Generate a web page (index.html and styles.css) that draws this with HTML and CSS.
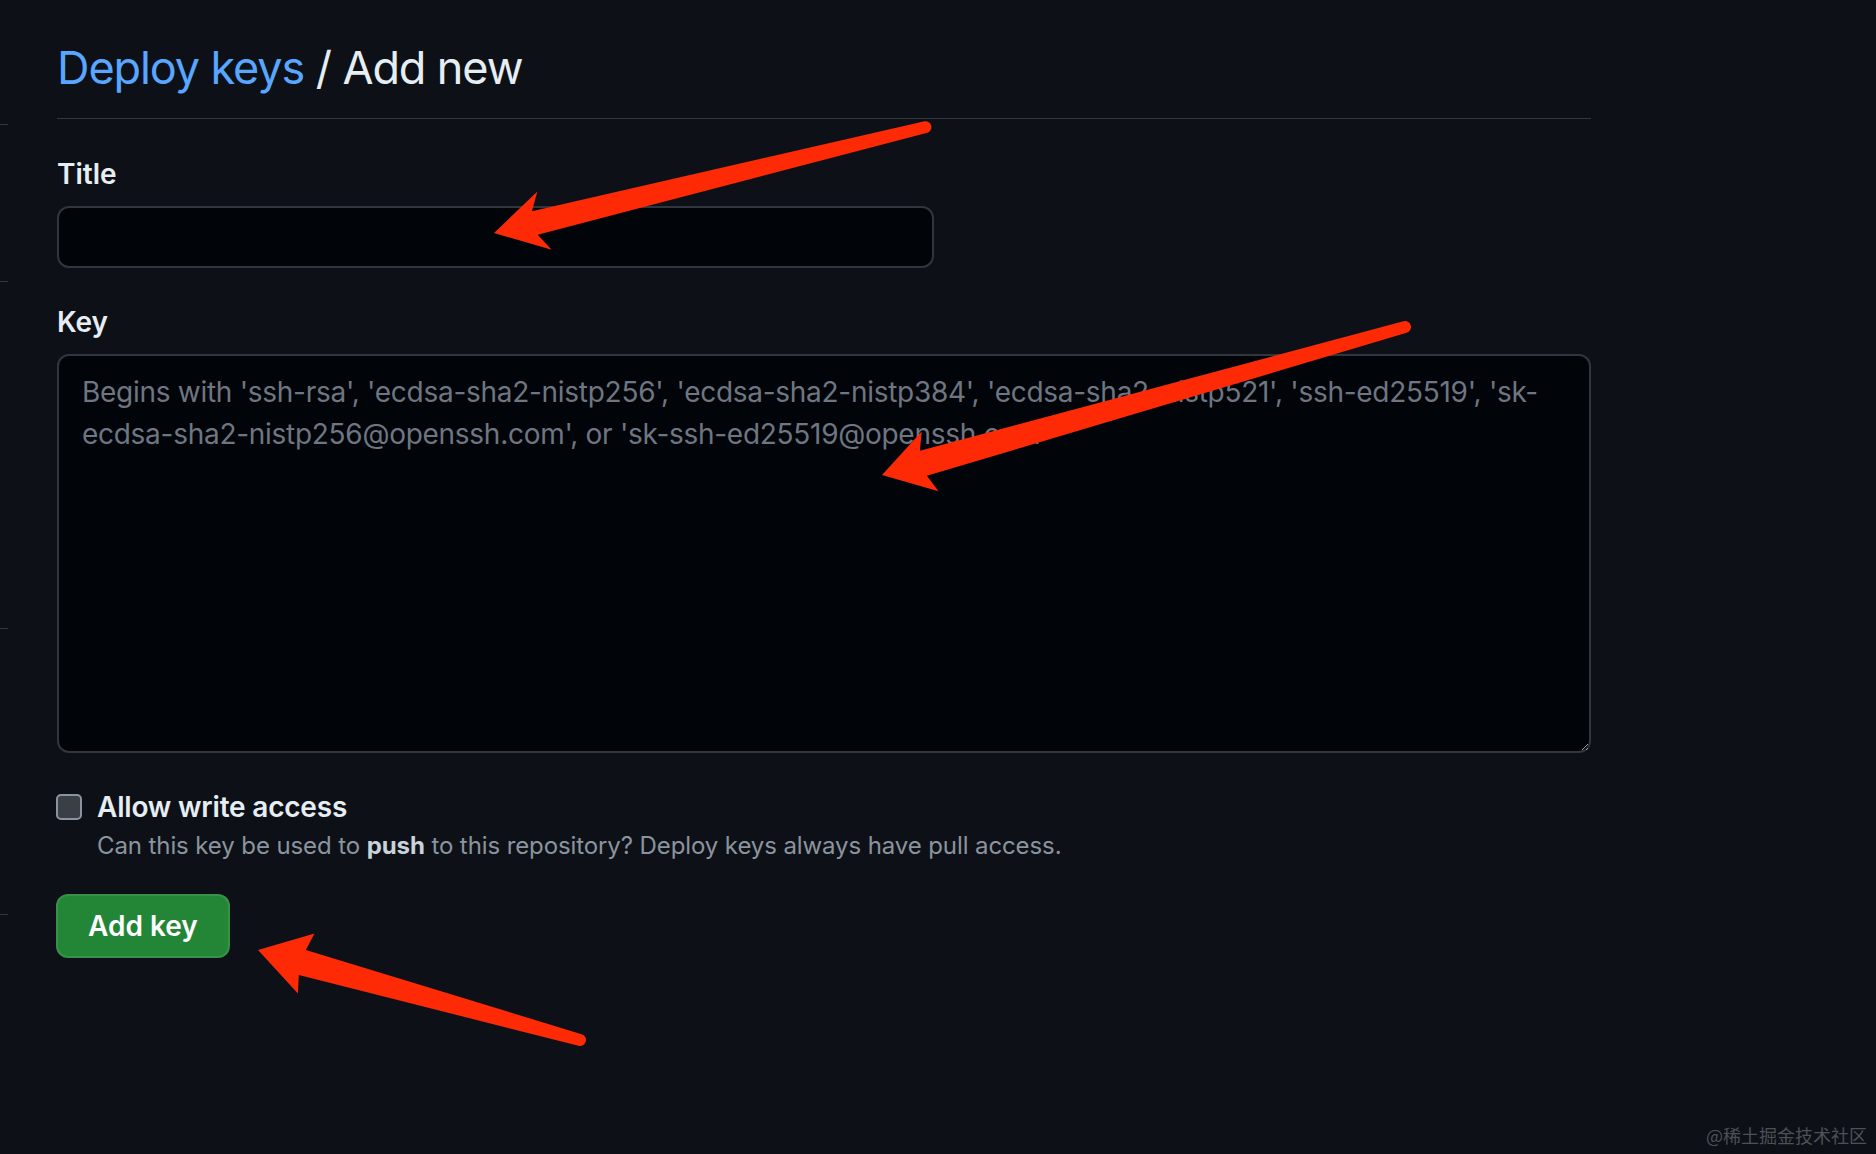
FILE: index.html
```html
<!DOCTYPE html>
<html lang="en">
<head>
<meta charset="utf-8">
<title>Deploy keys / Add new</title>
<link rel="stylesheet" href="styles.css">
</head>
<body>
<div class="page">
  <aside class="edge">
    <span class="tick tick-1"></span>
    <span class="tick tick-2"></span>
    <span class="tick tick-3"></span>
    <span class="tick tick-4"></span>
  </aside>
  <main class="content">
    <div class="subhead">
      <h2 class="subhead-heading"><a class="crumb" href="#">Deploy keys</a> / Add new</h2>
    </div>
    <form class="form">
      <div class="group">
        <label class="label" for="title">Title</label>
        <input class="field" id="title" type="text">
      </div>
      <div class="group">
        <label class="label" for="key">Key</label>
        <textarea class="field area" id="key" placeholder="Begins with 'ssh-rsa', 'ecdsa-sha2-nistp256', 'ecdsa-sha2-nistp384', 'ecdsa-sha2-nistp521', 'ssh-ed25519', 'sk-ecdsa-sha2-nistp256@openssh.com', or 'sk-ssh-ed25519@openssh.com'"></textarea>
      </div>
      <div class="check">
        <span class="box"></span>
        <div class="check-text">
          <div class="check-label">Allow write access</div>
          <p class="note">Can this key be used to <strong>push</strong> to this repository? Deploy keys always have pull access.</p>
        </div>
      </div>
      <button class="btn" type="button">Add key</button>
    </form>
  </main>
</div>
<svg class="annot" width="1876" height="1154" viewBox="0 0 1876 1154" aria-hidden="true">
  <path d="M494 233 L537.4 191.5 L531.9 211.3 L924.6 121.2 A6 6 0 0 1 927.4 132.8 L537.7 234.7 L551.6 249.7 Z"/>
  <path d="M882 475 L921.7 431.6 L919.9 450.8 L1403.4 321.2 A6 6 0 0 1 1406.6 332.8 L926.9 475.8 L938.5 491.2 Z"/>
  <path d="M258 950 L314.5 933.6 L305.8 949.9 L581.6 1034.2 A6 6 0 0 1 578.4 1045.8 L298.8 974.9 L297.9 993.4 Z"/>
</svg>
<div class="watermark">@稀土掘金技术社区</div>
</body>
</html>
```
FILE: styles.css
```css
html, body {
  margin: 0;
  padding: 0;
  background: #0d1117;
}
body {
  width: 1876px;
  height: 1154px;
  overflow: hidden;
  position: relative;
  font-family: Inter, "Noto Sans", "Liberation Sans", sans-serif;
  color: #e6edf3;
}
.page {
  display: flex;
  padding-top: 32px;
}
.edge {
  width: 8px;
  display: flex;
  flex-direction: column;
  flex: none;
}
.tick {
  display: block;
  height: 1px;
  background: #30363d;
}
.tick-1 { margin-top: 92px; }
.tick-2 { margin-top: 156px; }
.tick-3 { margin-top: 346px; }
.tick-4 { margin-top: 285px; }

.content {
  margin-left: 49px;
  width: 1534px;
}
.subhead {
  padding-bottom: 14px;
  border-bottom: 1px solid #30363d;
}
.subhead-heading {
  margin: 0;
  font-size: 45px;
  line-height: 72px;
  font-weight: 400;
  letter-spacing: -1.1px;
  color: #e6edf3;
}
.crumb {
  color: #58a6ff;
  text-decoration: none;
}
.form {
  margin-top: 34px;
}
.group {
  margin-bottom: 33px;
}
.label {
  display: block;
  font-size: 28px;
  line-height: 42px;
  font-weight: 600;
  margin-bottom: 11px;
  color: #e6edf3;
}
.field {
  display: block;
  box-sizing: border-box;
  width: 877px;
  height: 62px;
  margin: 0;
  padding: 10px 24px;
  background: #010409;
  border: 2px solid #30363d;
  border-radius: 12px;
  font-family: inherit;
  font-size: 28px;
  line-height: 42px;
  color: #e6edf3;
  outline: none;
  color-scheme: dark;
}
.area {
  width: 1534px;
  height: 399px;
  padding: 15px 23px;
  resize: vertical;
  letter-spacing: -0.28px;
}
.area::placeholder {
  color: #6e7681;
}
.check {
  display: flex;
  align-items: flex-start;
  gap: 15px;
  margin-top: 29px;
}
.box {
  flex: none;
  width: 22px;
  height: 22px;
  margin-top: 8px;
  margin-left: -1px;
  border: 2px solid #8b949e;
  border-radius: 5px;
  background: #3a3f46;
}
.check-label {
  font-size: 28px;
  line-height: 42px;
  font-weight: 600;
  letter-spacing: -0.2px;
  color: #e6edf3;
}
.note {
  margin: 0;
  font-size: 24px;
  line-height: 36px;
  letter-spacing: -0.1px;
  color: #8b949e;
}
.note strong {
  color: #c9d1d9;
  font-weight: 700;
}
.btn {
  display: block;
  margin-top: 30px;
  margin-left: -1px;
  height: 64px;
  padding: 0 30px;
  background: #238636;
  border: 2px solid rgba(240, 246, 252, 0.1);
  border-radius: 12px;
  font-family: inherit;
  font-size: 28px;
  font-weight: 600;
  color: #ffffff;
}
.annot {
  position: absolute;
  left: 0;
  top: 0;
  pointer-events: none;
}
.annot path {
  fill: #fd2a05;
}
.watermark {
  position: absolute;
  right: 9px;
  bottom: 8px;
  font-family: "Noto Sans CJK SC", sans-serif;
  font-size: 18px;
  line-height: 22px;
  color: rgba(200, 205, 212, 0.35);
}
```
